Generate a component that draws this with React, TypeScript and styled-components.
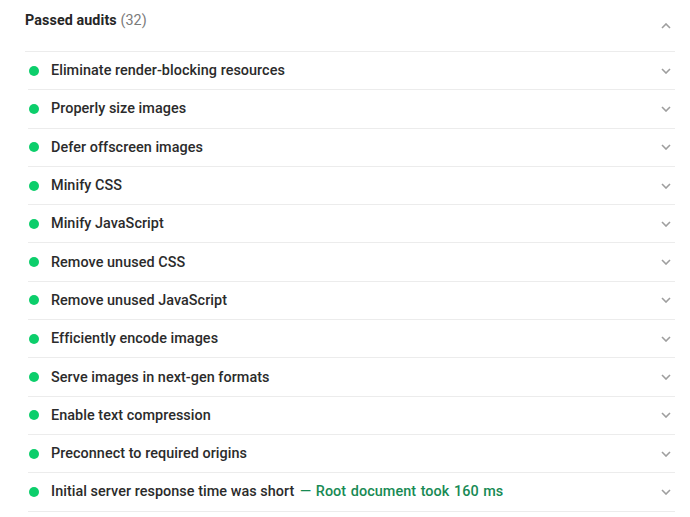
import React from "react";
import styled, { createGlobalStyle } from "styled-components";

const Global = createGlobalStyle`
  html, body { margin: 0; padding: 0; background: #fff; }
  body { font-family: Roboto, "Liberation Sans", Arial, sans-serif; color: #212121; }
`;

const Panel = styled.section`
  width: 650px;
  margin-left: 25px;
`;

const Header = styled.div`
  display: flex;
  align-items: center;
  justify-content: space-between;
  height: 51px;
  border-bottom: 1px solid #ececec;
`;

const Title = styled.div`
  font-size: 14.3px;
  font-weight: 700;
  color: #262626;
  margin-top: -11px;
  letter-spacing: 0.1px;
`;

const Count = styled.span`
  font-weight: 400;
  color: #7a7a7a;
`;

const List = styled.div`
  display: flex;
  flex-direction: column;
  margin-left: 3px;
`;

const Row = styled.div`
  display: flex;
  align-items: center;
  height: 37.3px;
  border-bottom: 1px solid #ececec;
`;

const Dot = styled.span`
  width: 10px;
  height: 10px;
  border-radius: 50%;
  background: #0cce6b;
  margin-left: 1px;
  margin-right: 12px;
  flex: none;
`;

const Label = styled.span`
  flex: 1;
  font-size: 14.4px;
  font-weight: 500;
  color: #2b2b2b;
  letter-spacing: 0.05px;
`;

const Detail = styled.span`
  color: #178a54;
  margin-left: 1px;
  word-spacing: 1px;
`;

const Chevron = styled.svg<{ $up?: boolean }>`
  width: 10px;
  height: 6px;
  margin-right: 4px;
  flex: none;
  transform: ${(p) => (p.$up ? "rotate(180deg)" : "none")};
`;

const ChevronIcon = ({ up }: { up?: boolean }) => (
  <Chevron $up={up} viewBox="0 0 10 6">
    <path d="M1 1l4 4 4-4" fill="none" stroke="#9e9e9e" strokeWidth="1.6" />
  </Chevron>
);

const audits: { label: string; detail?: string }[] = [
  { label: "Eliminate render-blocking resources" },
  { label: "Properly size images" },
  { label: "Defer offscreen images" },
  { label: "Minify CSS" },
  { label: "Minify JavaScript" },
  { label: "Remove unused CSS" },
  { label: "Remove unused JavaScript" },
  { label: "Efficiently encode images" },
  { label: "Serve images in next-gen formats" },
  { label: "Enable text compression" },
  { label: "Preconnect to required origins" },
  { label: "Initial server response time was short", detail: "— Root document took 160 ms" },
];

export default function App() {
  return (
    <>
      <Global />
      <Panel>
        <Header>
          <Title>
            Passed audits <Count>(32)</Count>
          </Title>
          <ChevronIcon up />
        </Header>
        <List>
          {audits.map((a) => (
            <Row key={a.label}>
              <Dot />
              <Label>
                {a.label}
                {a.detail && <Detail> {a.detail}</Detail>}
              </Label>
              <ChevronIcon />
            </Row>
          ))}
        </List>
      </Panel>
    </>
  );
}
